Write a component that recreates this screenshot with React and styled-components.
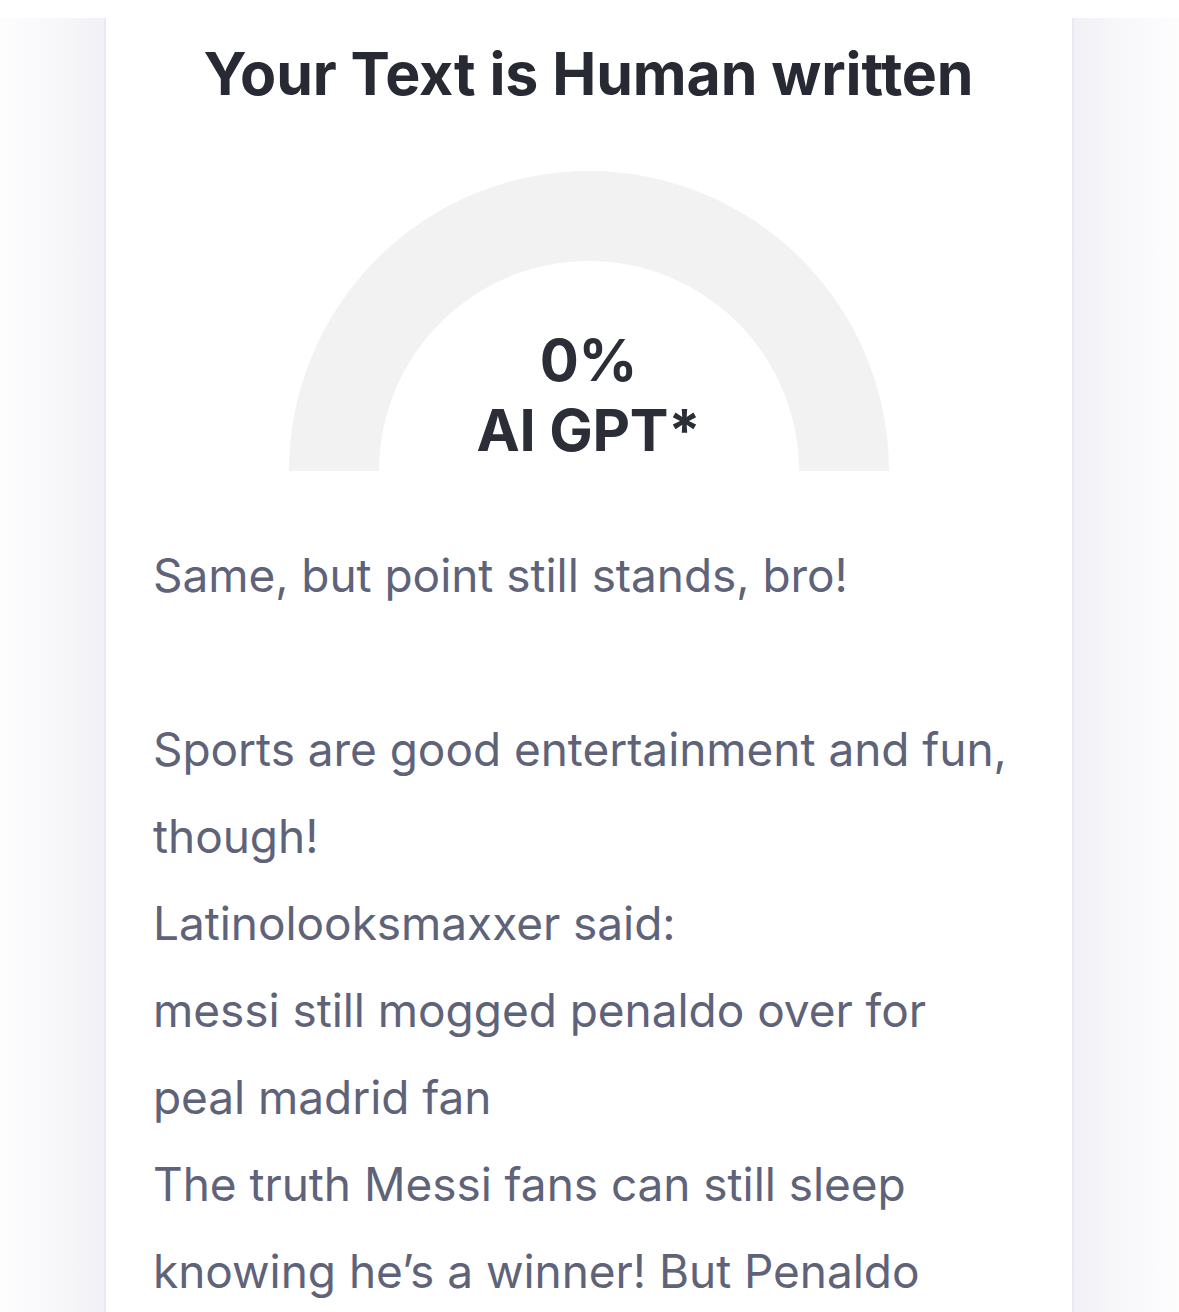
import React from "react";
import styled, { createGlobalStyle } from "styled-components";

const GlobalStyle = createGlobalStyle`
  html, body {
    margin: 0;
    padding: 0;
    background: #ffffff;
  }
  body {
    font-family: Inter, "Noto Sans", "Liberation Sans", sans-serif;
    -webkit-font-smoothing: antialiased;
  }
`;

const lines = [
  "Same, but point still stands, bro!",
  "",
  "Sports are good entertainment and fun, though!",
  "Latinolooksmaxxer said:",
  "messi still mogged penaldo over for peal madrid fan",
  "The truth Messi fans can still sleep knowing he’s a winner! But Penaldo",
];

function Gauge({ value }) {
  return (
    <GaugeWrap>
      <svg width="600" height="300" viewBox="0 0 600 300">
        <path
          d="M0 300 A300 300 0 0 1 600 300 L510 300 A210 210 0 0 0 90 300 Z"
          fill="#f2f2f2"
        />
      </svg>
      <GaugeLabel>
        <span>{value}%</span>
        <span>AI GPT*</span>
      </GaugeLabel>
    </GaugeWrap>
  );
}

export default function App() {
  return (
    <>
      <GlobalStyle />
      <Page>
        <Layout>
          <Side />
          <Card>
            <Title>Your Text is Human written</Title>
            <Gauge value={0} />
            <Body>
              {lines.map((l, i) => (
                <Line key={i}>{l || "\u00a0"}</Line>
              ))}
            </Body>
          </Card>
          <Side right />
        </Layout>
      </Page>
    </>
  );
}

const Page = styled.div`
  padding-top: 18px;
  min-height: 100vh;
  box-sizing: border-box;
`;

const Layout = styled.div`
  display: grid;
  grid-template-columns: 104px 1fr 105px;
  min-height: calc(100vh - 18px);
`;

const Side = styled.div`
  background: linear-gradient(
    ${(p) => (p.right ? "to left" : "to right")},
    #fdfdfe 0%,
    #f7f7fa 60%,
    #f1f1f6 100%
  );
`;

const Card = styled.div`
  background: #ffffff;
  border-left: 2px solid #e9e8f4;
  border-right: 2px solid #e9e8f4;
  padding: 20px 48px 0 47px;
  display: flex;
  flex-direction: column;
  align-items: center;
`;

const Title = styled.h1`
  margin: 0;
  font-size: 59px;
  line-height: 72px;
  font-weight: 700;
  color: #272a33;
  text-align: center;
  letter-spacing: -0.1px;
  font-variant-ligatures: none;
`;

const GaugeWrap = styled.div`
  position: relative;
  width: 600px;
  height: 300px;
  margin-top: 61px;

  svg {
    display: block;
  }
`;

const GaugeLabel = styled.div`
  position: absolute;
  left: 0;
  right: 0;
  bottom: 6px;
  display: flex;
  flex-direction: column;
  align-items: center;
  font-size: 58px;
  line-height: 70px;
  font-weight: 700;
  color: #2b2d37;
  letter-spacing: -0.2px;
`;

const Body = styled.div`
  align-self: stretch;
  margin-top: 61px;
`;

const Line = styled.p`
  margin: 0;
  font-size: 46px;
  line-height: 87px;
  color: #5f637a;
  font-weight: 400;
  letter-spacing: -0.05px;
`;
